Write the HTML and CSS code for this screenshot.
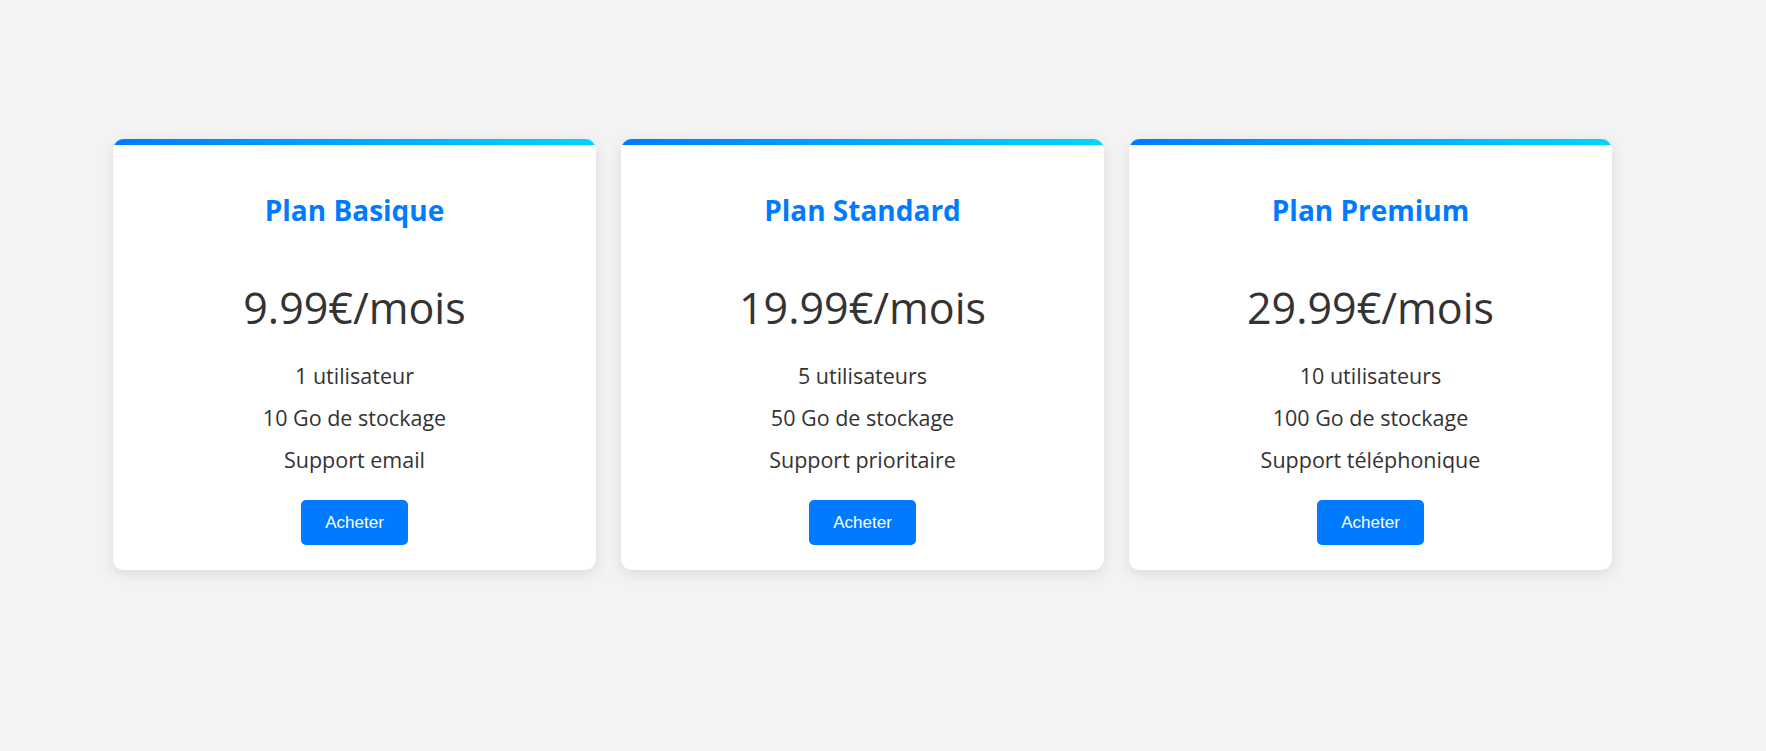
FILE: index.html
```html
<!DOCTYPE html>
<html lang="fr">
<head>
<meta charset="utf-8">
<title>Plans</title>
<link rel="stylesheet" href="styles.css">
</head>
<body>
<div class="pricing">
  <div class="card">
    <h2 class="title">Plan Basique</h2>
    <p class="price">9.99€/mois</p>
    <ul class="features">
      <li>1 utilisateur</li>
      <li>10 Go de stockage</li>
      <li>Support email</li>
    </ul>
    <button class="buy">Acheter</button>
  </div>
  <div class="card">
    <h2 class="title">Plan Standard</h2>
    <p class="price">19.99€/mois</p>
    <ul class="features">
      <li>5 utilisateurs</li>
      <li>50 Go de stockage</li>
      <li>Support prioritaire</li>
    </ul>
    <button class="buy">Acheter</button>
  </div>
  <div class="card">
    <h2 class="title">Plan Premium</h2>
    <p class="price">29.99€/mois</p>
    <ul class="features">
      <li>10 utilisateurs</li>
      <li>100 Go de stockage</li>
      <li>Support téléphonique</li>
    </ul>
    <button class="buy">Acheter</button>
  </div>
</div>
</body>
</html>
```
FILE: styles.css
```css
html, body {
  margin: 0;
  padding: 0;
}
body {
  background: #f3f3f3;
  font-family: "Segoe UI", "Open Sans", sans-serif;
  color: #333;
  height: 751px;
}
.pricing {
  display: flex;
  gap: 25px;
  padding: 139px 0 0 113px;
}
.card {
  width: 483px;
  background: #fff;
  border-radius: 11px;
  box-shadow: 0 4px 14px rgba(0, 0, 0, 0.1);
  overflow: hidden;
  text-align: center;
  display: flex;
  flex-direction: column;
  align-items: center;
  padding-bottom: 25px;
}
.card::before {
  content: "";
  align-self: stretch;
  height: 6px;
  background: linear-gradient(to right, #007bff, #00d4ff);
}
.title {
  margin: 47px 0 0;
  font-size: 28px;
  line-height: 36px;
  font-weight: 700;
  color: #007bff;
}
.price {
  margin: 53px 0 0;
  font-size: 43px;
  line-height: 54px;
}
.features {
  list-style: none;
  margin: 20px 0 0;
  padding: 0;
  font-size: 21.5px;
  line-height: 42px;
}
.buy {
  margin-top: 19px;
  height: 45px;
  padding: 0 24px;
  border: none;
  border-radius: 5px;
  background: #007bff;
  color: #fff;
  font-family: "Liberation Sans", Arial, sans-serif;
  font-size: 17px;
}
```
